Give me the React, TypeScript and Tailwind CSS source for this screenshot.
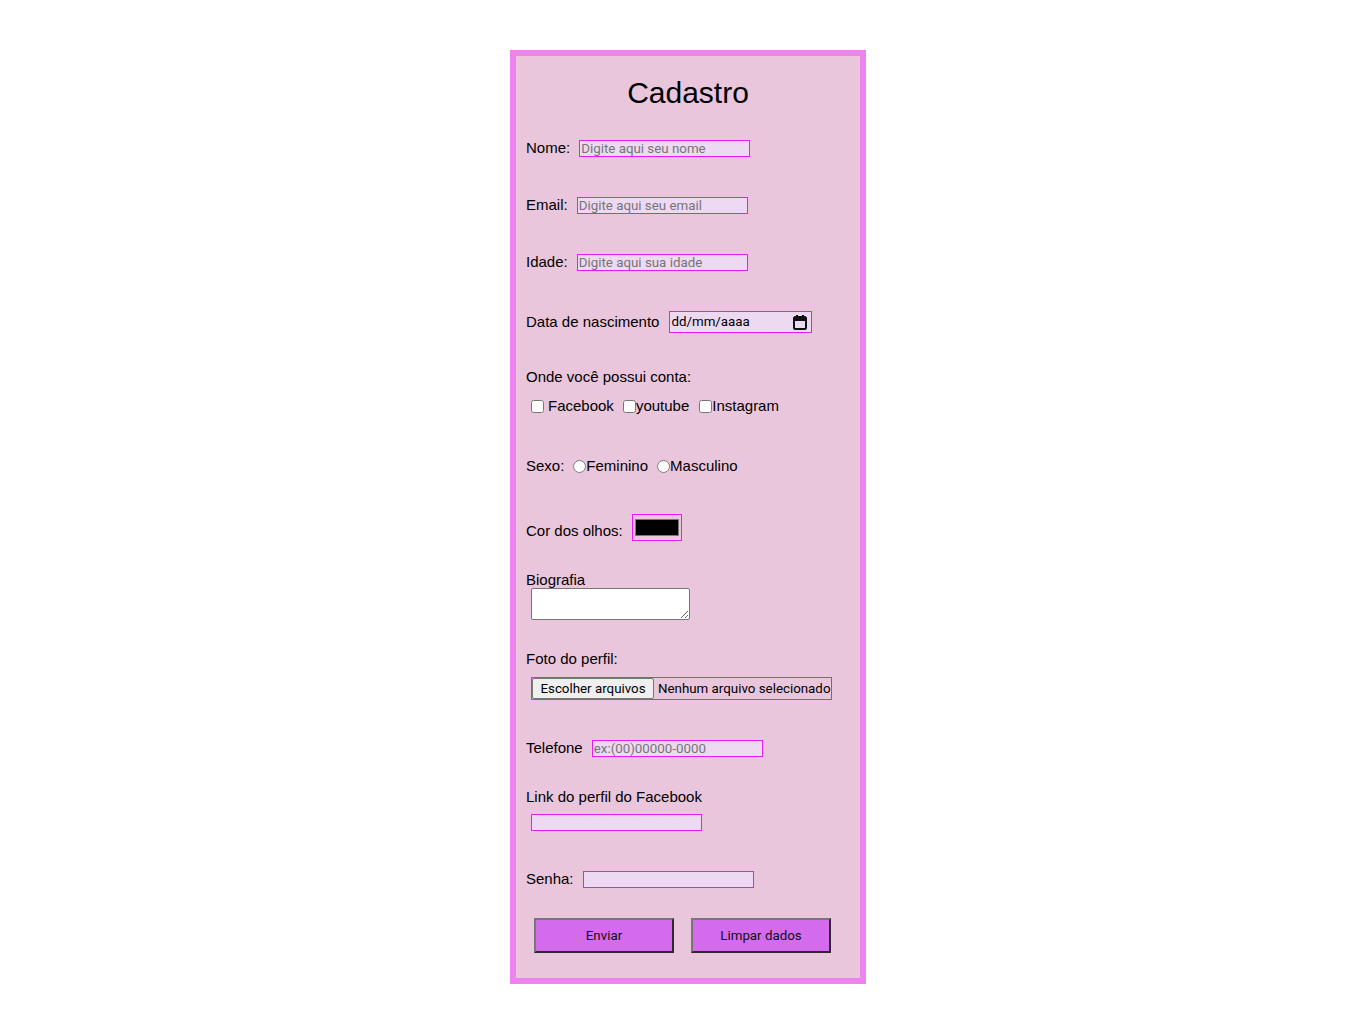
import React from 'react';

const inputCls =
  'h-[17px] w-[171px] border border-solid border-[#e41ef3] bg-[#eed9f3] px-[1px] text-[13.33px] leading-[15px] text-black placeholder:text-[#757575] outline-none font-[family-name:Roboto,sans-serif]';

function CalendarIcon() {
  return (
    <svg width="14" height="16" viewBox="0 0 14 16" className="shrink-0">
      <rect x="1" y="3" width="12" height="12" rx="1.5" fill="none" stroke="#111" strokeWidth="2" />
      <rect x="1" y="3" width="12" height="4" fill="#111" />
      <rect x="3" y="1" width="2" height="3" fill="#111" />
      <rect x="9" y="1" width="2" height="3" fill="#111" />
    </svg>
  );
}

export default function App() {
  return (
    <div className="min-h-screen bg-white pt-[50px] text-black font-[family-name:'Liberation_Sans',Arial,sans-serif]">
      <form className="ml-[510px] w-[356px] border-[6px] border-solid border-[#ee82ee] bg-[#e9c6dc] px-[10px] pb-[25px]">
        <h1 className="mt-[20px] h-[34px] text-center text-[30px] leading-[34px]">Cadastro</h1>

        {/* Nome */}
        <div className="mt-[30px] flex h-[17px] items-center text-[15px]">
          <span>Nome:</span>
          <input className={`ml-[9px] ${inputCls}`} placeholder="Digite aqui seu nome" />
        </div>

        {/* Email */}
        <div className="mt-[40px] flex h-[17px] items-center text-[15px]">
          <span>Email:</span>
          <input className={`ml-[9px] ${inputCls}`} placeholder="Digite aqui seu email" />
        </div>

        {/* Idade */}
        <div className="mt-[40px] flex h-[17px] items-center text-[15px]">
          <span>Idade:</span>
          <input className={`ml-[9px] ${inputCls}`} placeholder="Digite aqui sua idade" />
        </div>

        {/* Data de nascimento */}
        <div className="mt-[40px] flex h-[22px] items-center text-[15px]">
          <span>Data de nascimento</span>
          <div className="ml-[10px] flex h-[22px] w-[143px] items-center justify-between border border-solid border-[#e41ef3] bg-[#eed9f3] pl-[1px] pr-[4px] text-[13.33px] font-[family-name:Roboto,sans-serif]">
            <span>dd/mm/aaaa</span>
            <CalendarIcon />
          </div>
        </div>

        {/* Contas */}
        <div className="mt-[34px] flex h-[18px] items-center pt-[2px] text-[15px]">Onde você possui conta:</div>
        <div className="mt-[11px] flex h-[18px] items-center pt-[2px] text-[15px]">
          <input type="checkbox" className="m-0 ml-[5px] h-[13px] w-[13px]" />
          <span className="ml-[4px]">Facebook</span>
          <input type="checkbox" className="m-0 ml-[9px] h-[13px] w-[13px]" />
          <span>youtube</span>
          <input type="checkbox" className="m-0 ml-[10px] h-[13px] w-[13px]" />
          <span>Instagram</span>
        </div>

        {/* Sexo */}
        <div className="mt-[42px] flex h-[18px] items-center pt-[2px] text-[15px]">
          <span>Sexo:</span>
          <input type="radio" name="sexo" className="m-0 ml-[9px] h-[13px] w-[13px]" />
          <span>Feminino</span>
          <input type="radio" name="sexo" className="m-0 ml-[9px] h-[13px] w-[13px]" />
          <span>Masculino</span>
        </div>

        {/* Cor dos olhos */}
        <div className="mt-[40px] flex h-[27px] items-center text-[15px]">
          <span className="mt-[7px]">Cor dos olhos:</span>
          <div className="ml-[9px] flex h-[27px] w-[50px] items-center justify-center border border-solid border-[#e41ef3]">
            <div className="h-[17px] w-[44px] border border-solid border-[#777] bg-black" />
          </div>
        </div>

        {/* Biografia */}
        <div className="mt-[30px] h-[17px] text-[15px] leading-[17px]">Biografia</div>
        <textarea className="ml-[5px] block h-[32px] w-[159px] rounded-[2px] border border-solid border-[#767676] bg-white p-[2px] text-[13px]" />

        {/* Foto */}
        <div className="mt-[29px] flex h-[18px] items-center pt-[2px] text-[15px]">Foto do perfil:</div>
        <div className="ml-[5px] mt-[10px] flex h-[23px] w-[301px] items-center border border-solid border-[#e41ef3] text-[13.33px] font-[family-name:Roboto,sans-serif]">
          <div className="flex h-[21px] w-[122px] items-center justify-center rounded-[2px] border border-solid border-[#767676] bg-[#efefef]">
            Escolher arquivos
          </div>
          <span className="ml-[4px] whitespace-nowrap">Nenhum arquivo selecionado</span>
        </div>

        {/* Telefone */}
        <div className="mt-[40px] flex h-[17px] items-center text-[15px]">
          <span>Telefone</span>
          <input className={`ml-[9px] ${inputCls}`} placeholder="ex:(00)00000-0000" />
        </div>

        {/* Link */}
        <div className="mt-[30px] flex h-[18px] items-center pt-[2px] text-[15px]">Link do perfil do Facebook</div>
        <input className={`ml-[5px] mt-[9px] block ${inputCls}`} />

        {/* Senha */}
        <div className="mt-[40px] flex h-[17px] items-center text-[15px]">
          <span>Senha:</span>
          <input type="password" className={`ml-[9px] ${inputCls}`} />
        </div>

        {/* Botões */}
        <div className="mt-[30px] flex h-[35px]">
          <button
            type="button"
            className="ml-[8px] h-[35px] w-[140px] border-2 border-solid border-t-[#777] border-l-[#777] border-r-[#2a2a2a] border-b-[#2a2a2a] bg-[#d46bee] text-[13.33px] text-[#111] font-[family-name:Roboto,sans-serif]"
          >
            Enviar
          </button>
          <button
            type="button"
            className="ml-[17px] h-[35px] w-[140px] border-2 border-solid border-t-[#777] border-l-[#777] border-r-[#2a2a2a] border-b-[#2a2a2a] bg-[#d46bee] text-[13.33px] text-[#111] font-[family-name:Roboto,sans-serif]"
          >
            Limpar dados
          </button>
        </div>
      </form>
    </div>
  );
}
